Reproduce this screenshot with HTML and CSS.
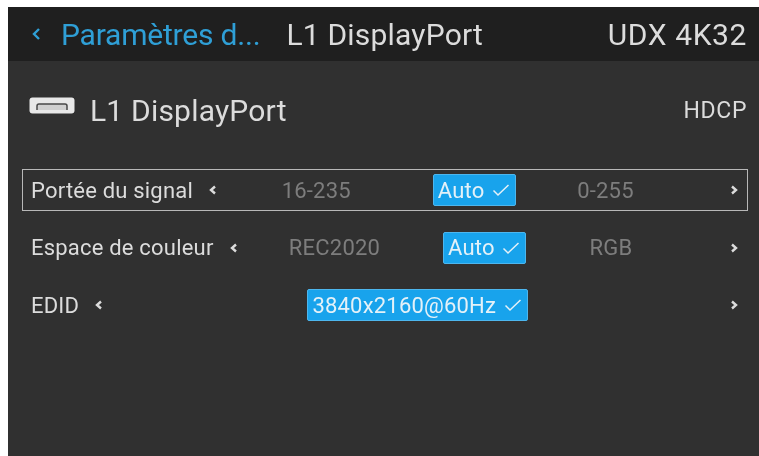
FILE: index.html
```html
<!DOCTYPE html>
<html lang="fr">
  <head>
    <meta charset="UTF-8" />
    <title>L1 DisplayPort</title>
    <link rel="stylesheet" href="styles.css">
  </head>

  <body>
    <div class="screen">
      <div class="header">
        <svg class="back" width="11" height="14" viewBox="0 0 11 14"><path d="M8 2 L3 7 L8 12" /></svg>
        <span class="crumb">Paramètres d...</span>
        <span class="current">L1 DisplayPort</span>
        <span class="model">UDX 4K32</span>
      </div>

      <div class="source">
        <svg class="port" width="46" height="17" viewBox="0 0 46 17">
          <rect class="port-body" x="0.5" y="0.5" width="45" height="16" rx="3" />
          <path class="port-slot" d="M8 13 V9 Q8 7 10 7 H36 Q38 7 38 9 V13" />
        </svg>
        <span class="source-name">L1 DisplayPort</span>
        <span class="hdcp">HDCP</span>
      </div>

      <div class="rows">
        <div class="row focused">
          <span class="label">Portée du signal</span>
          <svg class="arrow" width="8" height="10" viewBox="0 0 8 10"><path d="M6 1.5 L2 5 L6 8.5" /></svg>
          <div class="options wide-left">
            <span class="option left">16-235</span>
            <span class="selected">Auto <svg class="tick" width="18" height="14" viewBox="0 0 18 14"><path d="M1.5 7.5 L6 12 L16.5 2" /></svg></span>
            <span class="option right">0-255</span>
          </div>
          <svg class="arrow" width="8" height="10" viewBox="0 0 8 10"><path d="M2 1.5 L6 5 L2 8.5" /></svg>
        </div>

        <div class="row">
          <span class="label">Espace de couleur</span>
          <svg class="arrow" width="8" height="10" viewBox="0 0 8 10"><path d="M6 1.5 L2 5 L6 8.5" /></svg>
          <div class="options">
            <span class="option left">REC2020</span>
            <span class="selected">Auto <svg class="tick" width="18" height="14" viewBox="0 0 18 14"><path d="M1.5 7.5 L6 12 L16.5 2" /></svg></span>
            <span class="option right">RGB</span>
          </div>
          <svg class="arrow" width="8" height="10" viewBox="0 0 8 10"><path d="M2 1.5 L6 5 L2 8.5" /></svg>
        </div>

        <div class="row">
          <span class="label">EDID</span>
          <svg class="arrow" width="8" height="10" viewBox="0 0 8 10"><path d="M6 1.5 L2 5 L6 8.5" /></svg>
          <div class="options">
            <span class="selected">3840x2160@60Hz <svg class="tick" width="18" height="14" viewBox="0 0 18 14"><path d="M1.5 7.5 L6 12 L16.5 2" /></svg></span>
          </div>
          <svg class="arrow" width="8" height="10" viewBox="0 0 8 10"><path d="M2 1.5 L6 5 L2 8.5" /></svg>
        </div>
      </div>
    </div>
  </body>
</html>
```

FILE: styles.css
```css
html,
body {
  height: 100%;
}

body {
  margin: 0;
  padding: 7px 0 0 8px;
  box-sizing: border-box;
  background-color: white;
  overflow: hidden;
  font-family: Roboto, sans-serif;
}

.screen {
  height: 100%;
  display: flex;
  flex-direction: column;
  background-color: #303030;
  color: #dcdcdc;
  filter: blur(0.5px);
}

.header {
  height: 54px;
  flex: none;
  display: flex;
  align-items: center;
  padding: 0 12px 0 23px;
  background-color: #1f1f1f;
  font-size: 30px;
  letter-spacing: 0.2px;
}

.back {
  margin-right: 19px;
  fill: none;
  stroke: #2f9fd6;
  stroke-width: 2.4;
}

.crumb {
  color: #2f9fd6;
  margin-right: 26px;
  letter-spacing: -0.2px;
}

.model {
  margin-left: auto;
  letter-spacing: 0.6px;
}

.source {
  height: 98px;
  flex: none;
  display: flex;
  align-items: center;
  padding: 0 12px 0 21px;
}

.port {
  margin: 0 15px 10px 0;
}

.port-body {
  fill: #e8e8e8;
}

.port-slot {
  fill: #d0d0d0;
  stroke: #484848;
  stroke-width: 1.5;
}

.source-name {
  font-size: 30px;
  letter-spacing: 0.2px;
}

.hdcp {
  margin-left: auto;
  font-size: 23px;
  letter-spacing: 0.6px;
}

.rows {
  margin: 10px 11px 0 14px;
  display: flex;
  flex-direction: column;
  gap: 15.5px;
}

.row {
  height: 42px;
  box-sizing: border-box;
  display: flex;
  align-items: center;
  padding: 0 9px 0 8px;
  border: 1px solid transparent;
  font-size: 22px;
  letter-spacing: 0.2px;
}

.row.focused {
  border-color: #b8b8b8;
}

.label {
  margin-right: 16px;
}

.arrow {
  flex: none;
  fill: none;
  stroke: #dcdcdc;
  stroke-width: 2.4;
}

.options {
  flex: 1;
  display: grid;
  grid-template-columns: 1fr auto 1fr;
  align-items: center;
  column-gap: 63px;
  padding-left: 2px;
}

.options .selected:only-child {
  grid-column: 2;
}

.option {
  color: #7d7d7d;
}

.option.left {
  justify-self: end;
}

.option.right {
  justify-self: start;
}

.wide-left .option.left {
  margin-right: 19px;
}

.wide-left .option.right {
  margin-left: -2px;
}

.selected {
  height: 32px;
  box-sizing: border-box;
  display: flex;
  align-items: center;
  gap: 2px;
  padding: 0 5px 0 4px;
  background-color: #18a3ec;
  color: #e4f1f8;
  border: 1px solid #4db6ee;
  border-radius: 2px;
  white-space: pre;
}

.tick {
  fill: none;
  stroke: #e4f1f8;
  stroke-width: 1.5;
}
```
